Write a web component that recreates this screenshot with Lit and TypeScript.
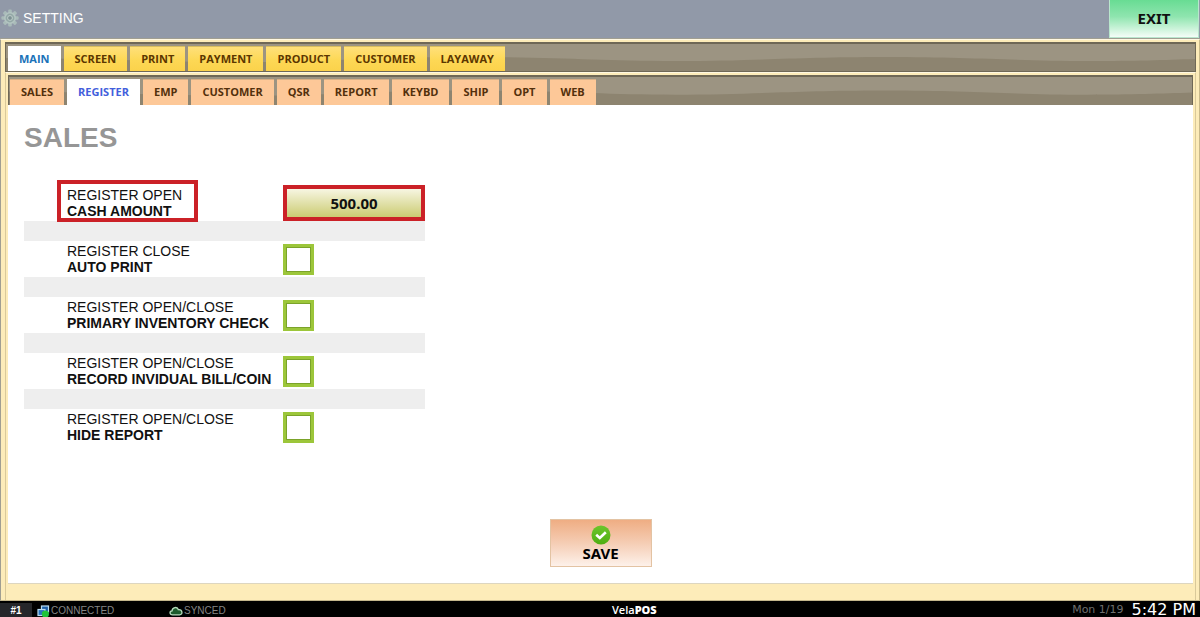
import { LitElement, html, css, svg } from "lit";
import { customElement, state } from "lit/decorators.js";
import { classMap } from "lit/directives/class-map.js";

interface Toggle {
  id: string;
  scope: string;
  name: string;
}

const MAIN_TABS = ["MAIN", "SCREEN", "PRINT", "PAYMENT", "PRODUCT", "CUSTOMER", "LAYAWAY"];
const SUB_TABS = ["SALES", "REGISTER", "EMP", "CUSTOMER", "QSR", "REPORT", "KEYBD", "SHIP", "OPT", "WEB"];
const TOGGLES: Toggle[] = [
  { id: "auto-print", scope: "REGISTER CLOSE", name: "AUTO PRINT" },
  { id: "inventory", scope: "REGISTER OPEN/CLOSE", name: "PRIMARY INVENTORY CHECK" },
  { id: "record", scope: "REGISTER OPEN/CLOSE", name: "RECORD INVIDUAL BILL/COIN" },
  { id: "hide-report", scope: "REGISTER OPEN/CLOSE", name: "HIDE REPORT" },
];

const TEETH = [0, 45, 90, 135, 180, 225, 270, 315];

const gear = html`<svg class="gear" viewBox="0 0 18 18" aria-hidden="true">
  ${TEETH.map((a) => svg`<rect x="7.2" y="0.4" width="3.6" height="5" rx="1" fill="#a9bbb9" transform="rotate(${a} 9 9)" />`)}
  <circle cx="9" cy="9" r="5.2" fill="#93a8a6" stroke="#b3c4c1" stroke-width="1.6" />
  <circle cx="9" cy="9" r="2.4" fill="#7d9193" stroke="#c0cecb" stroke-width="1" />
</svg>`;

const check = html`<svg class="check" viewBox="0 0 20 20" aria-hidden="true">
  <defs>
    <linearGradient id="ok" x1="0" y1="0" x2="0" y2="1">
      <stop offset="0" stop-color="#6cc52c" />
      <stop offset="1" stop-color="#4fae12" />
    </linearGradient>
  </defs>
  <circle cx="10" cy="10" r="9.5" fill="url(#ok)" />
  <path d="M5.2 9.8 L8.8 13 L14.8 7.2" fill="none" stroke="#fff" stroke-width="2.6" />
</svg>`;

const network = html`<svg class="net" viewBox="0 0 13 13" aria-hidden="true">
  <rect x="4.5" y="1" width="7" height="6" fill="#1d5fa8" stroke="#b9dcf2" stroke-width="1.2" />
  <rect x="1" y="4.5" width="7" height="6" fill="#2a74bd" stroke="#b9dcf2" stroke-width="1.2" />
  <circle cx="8.4" cy="9" r="3.6" fill="#1fc43a" />
</svg>`;

const cloud = html`<svg class="cloud" viewBox="0 0 14 10" aria-hidden="true">
  <path
    d="M3.6 8.8 C0.4 8.8 0.2 5.2 3 4.9 C3.2 1.2 8.4 0.2 9.4 3.7 C13.6 3.2 14.2 8.8 10.6 8.8 Z"
    fill="#1d5a2c"
    stroke="#b5dcbc"
    stroke-width="1.3"
  />
</svg>`;

const wave = html`<svg class="wave" viewBox="0 0 1190 27" preserveAspectRatio="none" aria-hidden="true">
  <path
    d="M0 14 C80 14 150 18 240 18 C330 18 360 13 460 13 C560 13 590 17 670 17 C750 17 790 13 880 13 C970 13 1010 17 1085 17 C1130 17 1160 16 1190 15 V27 H0 Z"
    fill="#8d8470"
  />
</svg>`;

@customElement("app-root")
export class AppRoot extends LitElement {
  static styles = css`
    :host {
      display: flex;
      flex-direction: column;
      min-height: 100vh;
      box-sizing: border-box;
      background: #fdecb9;
      color: #111;
      font-family: "Liberation Sans", Arial, sans-serif;
      font-size: 14px;
      line-height: 16px;
    }
    * {
      box-sizing: border-box;
    }
    button,
    input {
      margin: 0;
      border-radius: 0;
      font: inherit;
    }
    .header {
      display: flex;
      align-items: stretch;
      justify-content: space-between;
      height: 39px;
      padding-right: 1px;
      background: #9199a8;
      border-bottom: 1px solid #a09e92;
    }
    .title {
      display: flex;
      align-items: center;
      gap: 4px;
      margin: 0;
      padding-left: 1px;
      padding-bottom: 2px;
      color: #fff;
      font-size: 14px;
      font-weight: 400;
    }
    .gear {
      width: 18px;
      height: 18px;
    }
    .exit {
      width: 90px;
      height: 38px;
      padding: 0 0 2px;
      border: 1px solid #b9e6cd;
      border-top: 0;
      background: linear-gradient(#68dc93, #8fe5af 45%, #f4fdf7);
      color: #111;
      font: 700 15px/20px "Noto Sans", sans-serif;
    }
    .frame {
      flex: 1;
      display: flex;
      flex-direction: column;
      padding: 2px 3px 0 4px;
      background: #fdecb9;
      border-top: 1px solid #fff8e2;
      border-left: 1px solid #a09e92;
      border-right: 1px solid #c9b98a;
      border-bottom: 1px solid #c4b68c;
    }
    .inner {
      flex: 1;
      display: flex;
      flex-direction: column;
      padding: 2px 2px 16px 2px;
      border-top: 1px solid #fff8e2;
      border-left: 1px solid #d9c99a;
      border-right: 1px solid #d9c99a;
    }
    .strip {
      position: relative;
      display: flex;
      align-items: flex-end;
      gap: 3px;
      height: 30px;
      background: #9c9482;
      border: 1px solid #6f6856;
      border-top-width: 2px;
    }
    .wave {
      position: absolute;
      inset: 0;
      width: 100%;
      height: 100%;
    }
    .strip.main {
      padding-left: 2px;
    }
    .strip.sub {
      padding-left: 1px;
      border-bottom: 0;
    }
    .tab {
      position: relative;
      height: 25px;
      padding: 0 11px 2px;
      border: 0;
      border-top: 1px solid #d8bd5e;
      background: linear-gradient(#ffe07a, #fdd855 55%, #fbd24b);
      color: #5b3600;
      font: 700 11px/15px "Open Sans", sans-serif;
      white-space: nowrap;
    }
    .sub .tab {
      height: 26px;
      background: #fdc898;
      border-top-color: #d9b087;
      color: #53300c;
    }
    .main .tab.on {
      background: #fff;
      border-color: #fff;
      color: #1a73b9;
    }
    .sub .tab.on {
      background: #fff;
      border-color: #fff;
      color: #4260dc;
    }
    .panel {
      flex: 1;
      display: flex;
      flex-direction: column;
      padding: 18px 16px 16px;
      background: #fff;
      border-bottom: 1px solid #ddd6c0;
    }
    .heading {
      margin: 0 0 32px;
      color: #969696;
      font-size: 28px;
      line-height: 30px;
      font-weight: 700;
    }
    .form {
      width: 401px;
      max-width: 100%;
    }
    .row {
      display: grid;
      grid-template-columns: 216px 1fr;
      align-items: center;
      height: 36px;
      padding-left: 43px;
    }
    .band {
      height: 20px;
      background: #eee;
    }
    .label {
      display: block;
      position: relative;
      justify-self: start;
      white-space: nowrap;
    }
    .label b {
      display: block;
    }
    .marked::after {
      content: "";
      position: absolute;
      inset: -7px -16px -3px -10px;
      border: 4px solid #cb2127;
      pointer-events: none;
    }
    .amount {
      width: 100%;
      height: 36px;
      border: 4px solid #cb2127;
      background: linear-gradient(#f7f6e2, #cbcc72);
      color: #111;
      font: 700 15px/20px "Noto Sans", sans-serif;
      text-align: center;
    }
    .box {
      appearance: none;
      width: 31px;
      height: 31px;
      background: #fff;
      border: 3px solid #9cc63a;
      outline: 1px solid #7ba32a;
      outline-offset: -4px;
    }
    .box:checked {
      background: #9cc63a;
      background-clip: content-box;
      padding: 5px;
    }
    .save {
      display: flex;
      flex-direction: column;
      align-items: center;
      align-self: center;
      width: 102px;
      height: 48px;
      margin-top: auto;
      padding: 5px 0 0;
      border: 1px solid #e3c3a3;
      background: linear-gradient(#efad83, #f5cdb4 50%, #fdf1ea);
      color: #000;
      font: 700 15px/17px "Noto Sans", sans-serif;
    }
    .check {
      width: 20px;
      height: 20px;
    }
    .status {
      display: grid;
      grid-template-columns: 51% auto 1fr;
      align-items: center;
      height: 16px;
      background: #000;
      color: #858585;
      font-size: 10px;
    }
    .left {
      display: flex;
      align-items: center;
      padding-top: 2px;
    }
    .station {
      width: 32px;
      margin-right: 5px;
      background: #25262a;
      color: #fff;
      font-weight: 700;
      text-align: center;
    }
    .state {
      display: flex;
      align-items: center;
      gap: 1px;
    }
    .state.link {
      width: 132px;
    }
    .net {
      width: 13px;
      height: 13px;
    }
    .cloud {
      width: 14px;
      height: 10px;
    }
    .brand {
      color: #fff;
      font: 600 11px/16px "Open Sans", sans-serif;
    }
    .right {
      display: flex;
      align-items: center;
      justify-content: flex-end;
      gap: 8px;
      padding-right: 4px;
      color: #6f6f6f;
      font: 11px/16px "DejaVu Sans", sans-serif;
    }
    .clock {
      color: #fff;
      font-size: 16px;
    }
  `;

  @state() private mainTab = "MAIN";
  @state() private subTab = "REGISTER";

  private tabs(kind: string, names: string[], current: string, pick: (n: string) => void) {
    return html`<nav class="strip ${kind}">
      ${wave}
      ${names.map(
        (n) => html`<button class=${classMap({ tab: true, on: n === current })} @click=${() => pick(n)}>${n}</button>`
      )}
    </nav>`;
  }

  render() {
    return html`
      <header class="header">
        <h1 class="title">${gear}SETTING</h1>
        <button class="exit">EXIT</button>
      </header>
      <main class="frame">
        ${this.tabs("main", MAIN_TABS, this.mainTab, (n) => (this.mainTab = n))}
        <div class="inner">
          ${this.tabs("sub", SUB_TABS, this.subTab, (n) => (this.subTab = n))}
          <section class="panel">
            <h2 class="heading">SALES</h2>
            <div class="form">
              <div class="row">
                <label class="label marked" for="cash">REGISTER OPEN<b>CASH AMOUNT</b></label>
                <input class="amount" id="cash" type="text" inputmode="decimal" value="500.00" />
              </div>
              ${TOGGLES.map(
                (t) => html`<div class="band"></div>
                  <div class="row">
                    <label class="label" for=${t.id}>${t.scope}<b>${t.name}</b></label>
                    <input class="box" id=${t.id} type="checkbox" />
                  </div>`
              )}
            </div>
            <button class="save">${check}SAVE</button>
          </section>
        </div>
      </main>
      <footer class="status">
        <div class="left">
          <span class="station">#1</span>
          <span class="state link">${network}CONNECTED</span>
          <span class="state">${cloud}SYNCED</span>
        </div>
        <span class="brand">Vela<b>POS</b></span>
        <div class="right"><span>Mon 1/19</span><span class="clock">5:42 PM</span></div>
      </footer>
    `;
  }
}
